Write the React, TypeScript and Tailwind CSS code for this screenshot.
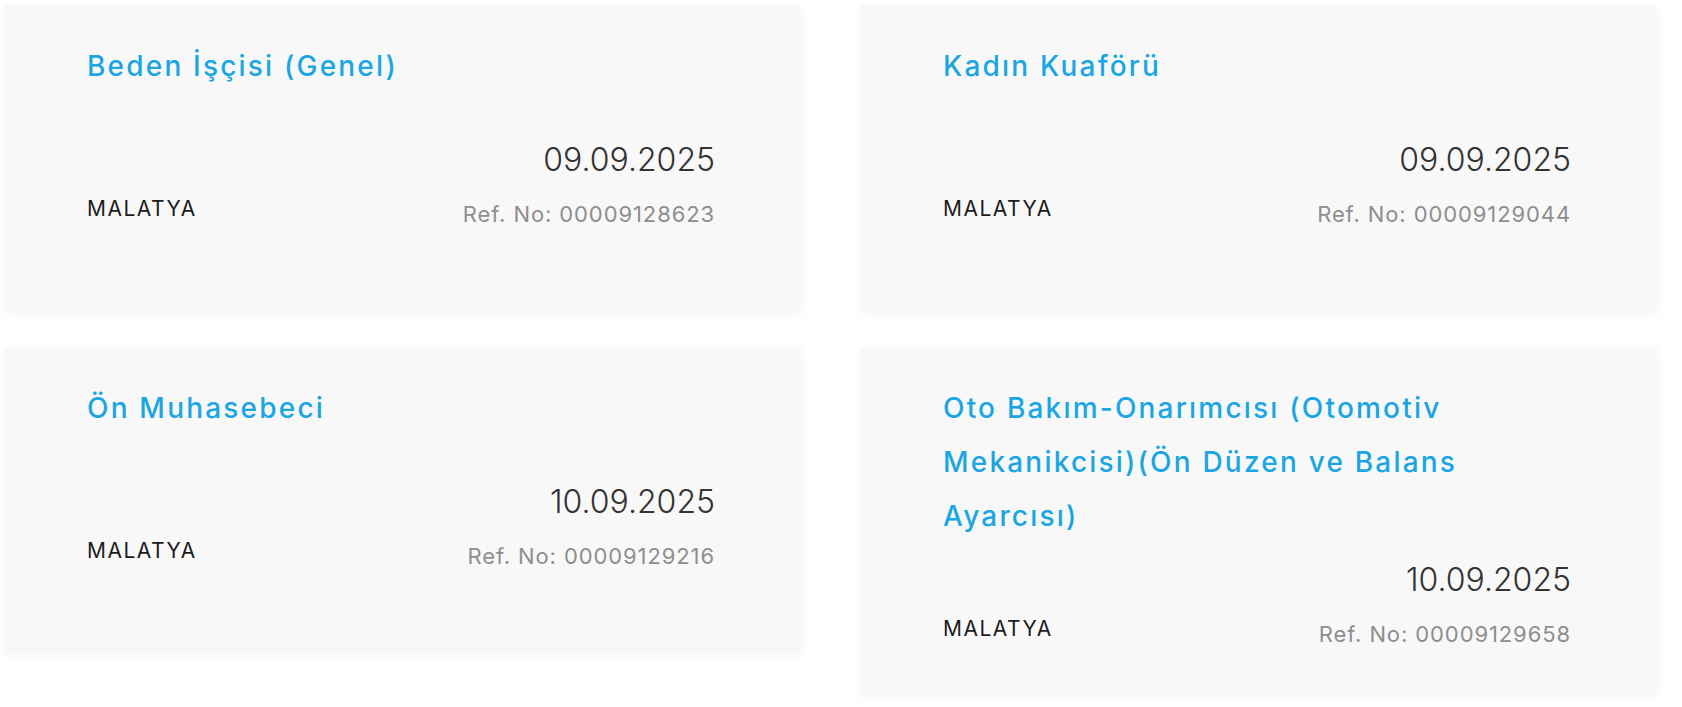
import React from 'react';

type Ilan = {
  title: string;
  date: string;
  city: string;
  ref: string;
};

const ilanlar: Ilan[] = [
  { title: 'Beden İşçisi (Genel)', date: '09.09.2025', city: 'MALATYA', ref: '00009128623' },
  { title: 'Kadın Kuaförü', date: '09.09.2025', city: 'MALATYA', ref: '00009129044' },
  { title: 'Ön Muhasebeci', date: '10.09.2025', city: 'MALATYA', ref: '00009129216' },
  {
    title: 'Oto Bakım-Onarımcısı (Otomotiv Mekanikcisi)(Ön Düzen ve Balans Ayarcısı)',
    date: '10.09.2025',
    city: 'MALATYA',
    ref: '00009129658',
  },
];

function IlanKarti({ ilan }: { ilan: Ilan }) {
  return (
    <div className="min-h-[302px] bg-[#f8f8f8] pl-[82px] pr-[86px] pt-[34px] pb-[41px] shadow-[0_6px_12px_rgba(0,0,0,0.05)]">
      <a
        href="#"
        className="mb-[15px] block min-h-[84px] text-[28px] font-medium leading-[54px] tracking-[2.2px] text-[#1aa6e2]"
      >
        {ilan.title}
      </a>
      <div className="flex items-end justify-between">
        <span className="mb-[5px] text-[21px] leading-[30px] tracking-[1.5px] text-[#1c1c1c]">{ilan.city}</span>
        <div className="flex flex-col items-end">
          <span className="text-[32px] font-light leading-[44px] text-[#333333]">{ilan.date}</span>
          <span className="mt-[17px] text-[22px] leading-[30px] tracking-[0.9px] text-[#8e8e8e]">
            Ref. No: {ilan.ref}
          </span>
        </div>
      </div>
    </div>
  );
}

export default function App() {
  return (
    <div className="min-h-screen bg-white font-['Inter',sans-serif]">
      <div className="grid grid-cols-[796px_796px] items-start gap-x-[60px] gap-y-[40px] px-[5px] pt-[5px]">
        {ilanlar.map((ilan) => (
          <IlanKarti key={ilan.ref} ilan={ilan} />
        ))}
      </div>
    </div>
  );
}
